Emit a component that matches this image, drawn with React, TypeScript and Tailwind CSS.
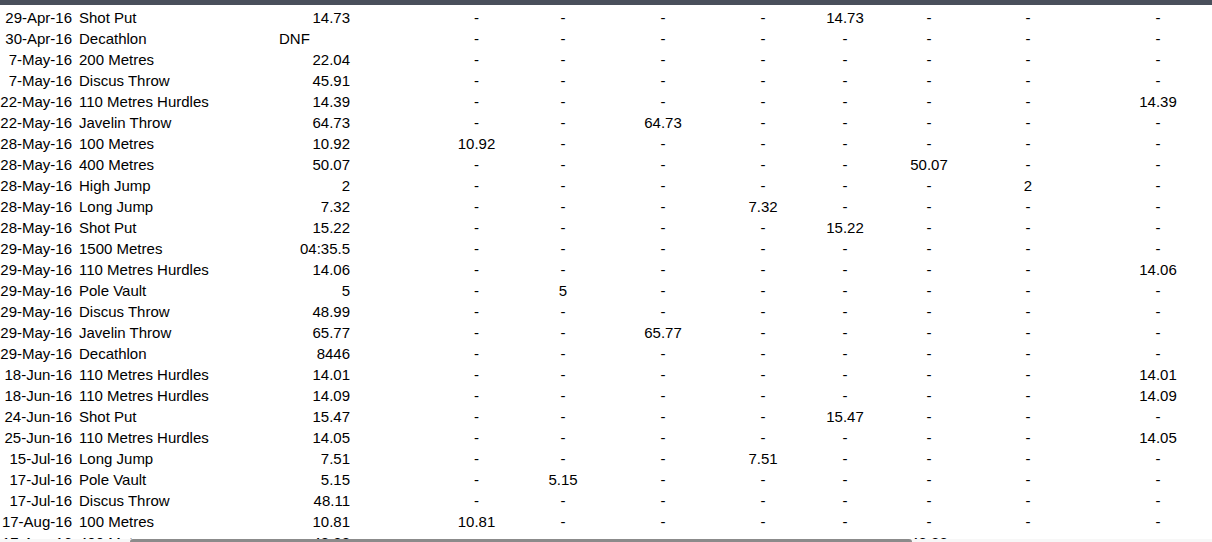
import { FC } from 'react';

type Row = {
  date: string;
  event: string;
  mark: string;
  // which result column holds the mark (-1 for none)
  col: number;
};

// result columns: 100m, pole vault, javelin, long jump, shot put, 400m, high jump, 110m hurdles
const colFor: Record<string, number> = {
  '100 Metres': 0,
  'Pole Vault': 1,
  'Javelin Throw': 2,
  'Long Jump': 3,
  'Shot Put': 4,
  '400 Metres': 5,
  'High Jump': 6,
  '110 Metres Hurdles': 7,
};

const raw: [string, string, string][] = [
  ['29-Apr-16', 'Shot Put', '14.73'],
  ['30-Apr-16', 'Decathlon', 'DNF'],
  ['7-May-16', '200 Metres', '22.04'],
  ['7-May-16', 'Discus Throw', '45.91'],
  ['22-May-16', '110 Metres Hurdles', '14.39'],
  ['22-May-16', 'Javelin Throw', '64.73'],
  ['28-May-16', '100 Metres', '10.92'],
  ['28-May-16', '400 Metres', '50.07'],
  ['28-May-16', 'High Jump', '2'],
  ['28-May-16', 'Long Jump', '7.32'],
  ['28-May-16', 'Shot Put', '15.22'],
  ['29-May-16', '1500 Metres', '04:35.5'],
  ['29-May-16', '110 Metres Hurdles', '14.06'],
  ['29-May-16', 'Pole Vault', '5'],
  ['29-May-16', 'Discus Throw', '48.99'],
  ['29-May-16', 'Javelin Throw', '65.77'],
  ['29-May-16', 'Decathlon', '8446'],
  ['18-Jun-16', '110 Metres Hurdles', '14.01'],
  ['18-Jun-16', '110 Metres Hurdles', '14.09'],
  ['24-Jun-16', 'Shot Put', '15.47'],
  ['25-Jun-16', '110 Metres Hurdles', '14.05'],
  ['15-Jul-16', 'Long Jump', '7.51'],
  ['17-Jul-16', 'Pole Vault', '5.15'],
  ['17-Jul-16', 'Discus Throw', '48.11'],
  ['17-Aug-16', '100 Metres', '10.81'],
  ['17-Aug-16', '400 Metres', '48.28'],
];

const rows: Row[] = raw.map(([date, event, mark]) => ({
  date,
  event,
  mark,
  col: event in colFor ? colFor[event] : -1,
}));

const SheetRow: FC<{ row: Row }> = ({ row }) => {
  const isText = isNaN(parseFloat(row.mark));
  return (
    <div className="grid h-[21px] grid-cols-[74px_202px_77px_80px_87px_86px_114px_86px_78px_90px_108px_152px] items-center whitespace-nowrap leading-[21px]">
      <div className="pr-[2px] text-right">{row.date}</div>
      <div className="pl-[5px]">{row.event}</div>
      {isText ? (
        <div className="pl-[3px] text-left">{row.mark}</div>
      ) : (
        <div className="pr-[3px] text-right">{row.mark}</div>
      )}
      <div />
      {Array.from({ length: 8 }).map((_, i) => (
        <div key={i} className="text-center">
          {row.col === i ? row.mark : '-'}
        </div>
      ))}
    </div>
  );
};

export default function App() {
  return (
    <div className="relative h-[542px] w-[1212px] overflow-hidden bg-white font-['Liberation_Sans',Arial,sans-serif] text-[15px] text-black">
      <div className="h-[5px] bg-[#494f5b]" />
      <div className="w-[1234px] pt-[2px]">
        {rows.map((row, i) => (
          <SheetRow key={i} row={row} />
        ))}
      </div>

      {/* horizontal scrollbar peeking in at the bottom */}
      <div className="absolute bottom-0 left-0 h-[3px] w-full bg-[#f7f7f7]">
        <div className="ml-[130px] h-[3px] w-[782px] rounded-t-[3px] bg-[#8b8b8b]" />
      </div>
    </div>
  );
}
